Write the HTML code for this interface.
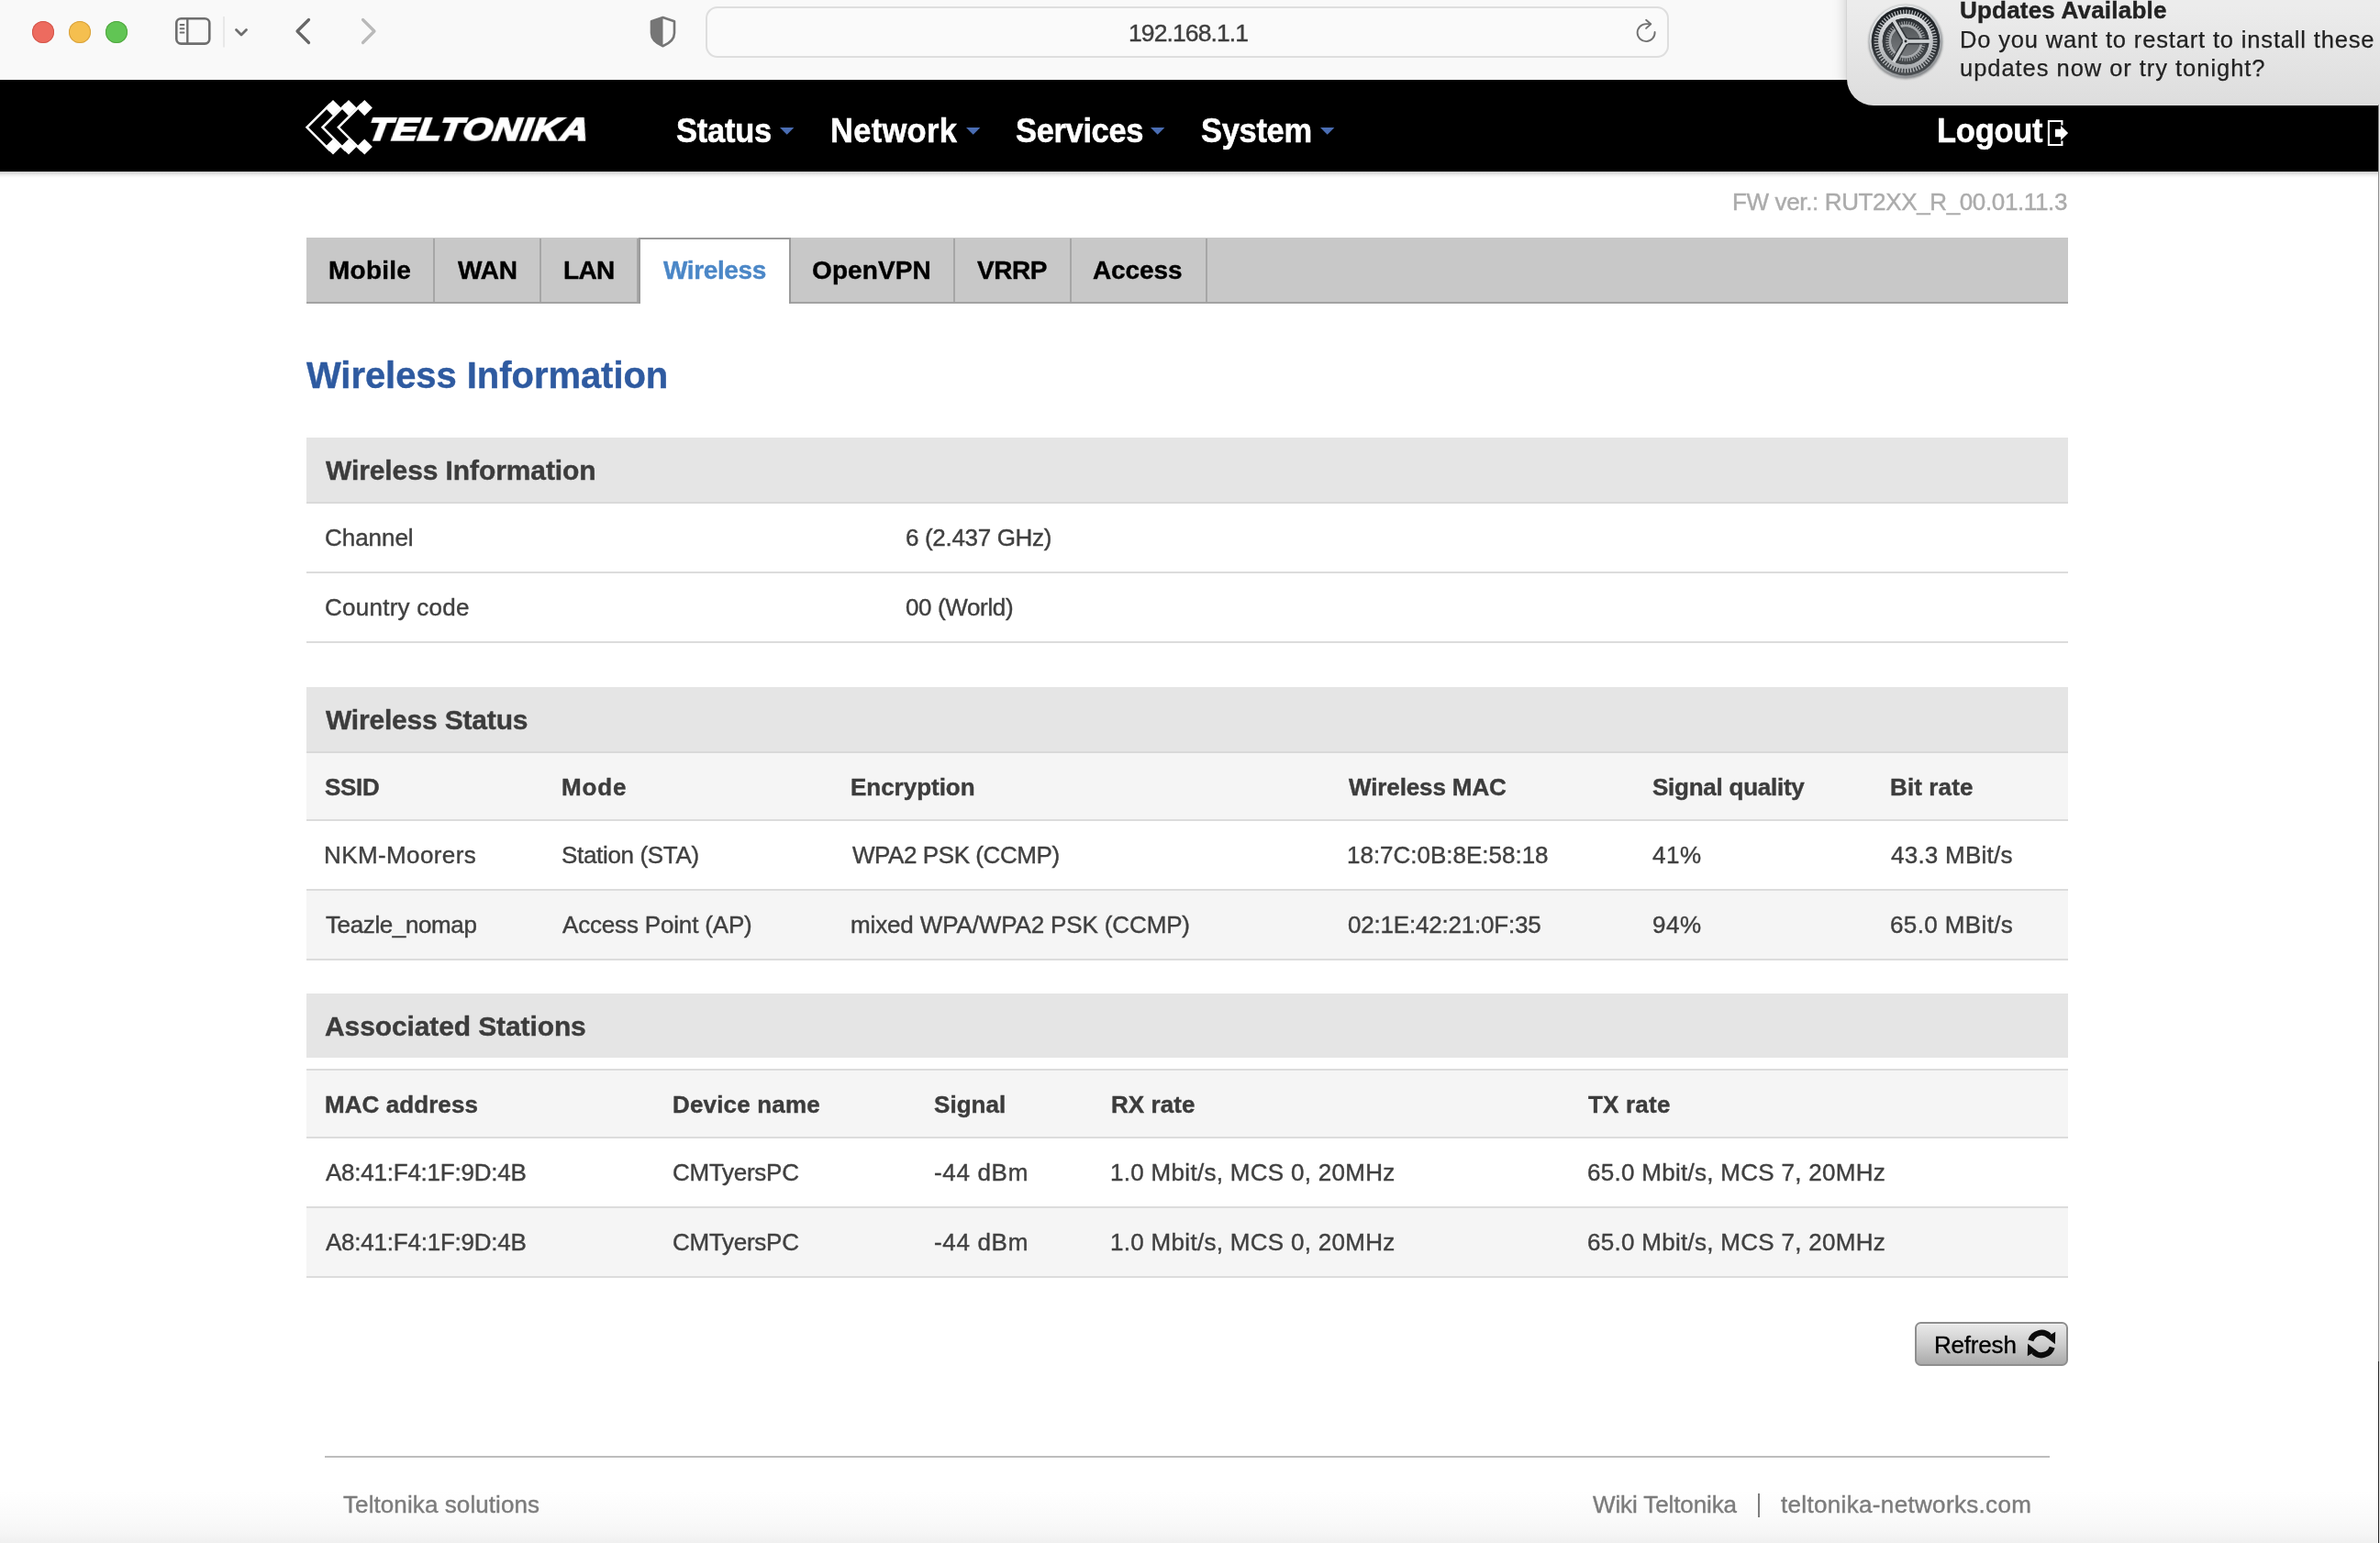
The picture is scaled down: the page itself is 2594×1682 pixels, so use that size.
<!DOCTYPE html>
<html lang="en"><head><meta charset="utf-8"><title>Wireless Information</title>
<style>
html,body{margin:0;padding:0;}
body{width:2594px;height:1682px;position:relative;overflow:hidden;background:#fff;font-family:"Liberation Sans",sans-serif;}
.t{position:absolute;white-space:nowrap;line-height:1;will-change:transform;-webkit-text-stroke:0.4px;}
.b{position:absolute;}
svg{position:absolute;overflow:visible;}
</style></head><body>
<div class="b" style="left:0px;top:1625px;width:2594px;height:57px;background:linear-gradient(#fff 0,#fdfdfd 22%,#fafafa 52%,#f6f6f6 80%,#f0f0f0 100%);"></div>
<div class="b" style="left:0px;top:0px;width:2594px;height:87px;background:#f9f9f9;"></div>
<div class="b" style="left:35px;top:22.5px;width:24px;height:24px;border-radius:50%;background:#ed6b5f;box-shadow:inset 0 0 0 1px #d3564b;"></div>
<div class="b" style="left:75px;top:22.5px;width:24px;height:24px;border-radius:50%;background:#f5bf4f;box-shadow:inset 0 0 0 1px #d8a13d;"></div>
<div class="b" style="left:115px;top:22.5px;width:24px;height:24px;border-radius:50%;background:#61c554;box-shadow:inset 0 0 0 1px #51a640;"></div>
<svg style="left:0;top:0" width="450" height="87" viewBox="0 0 450 87" fill="none">
<rect x="192.3" y="20.2" width="36" height="27.4" rx="5" stroke="#6e6e6e" stroke-width="2.6"/>
<line x1="204.3" y1="20.2" x2="204.3" y2="47.6" stroke="#6e6e6e" stroke-width="2.4"/>
<g stroke="#6e6e6e" stroke-width="2" stroke-linecap="round"><line x1="196.6" y1="27" x2="200.4" y2="27"/><line x1="196.6" y1="31.2" x2="200.4" y2="31.2"/><line x1="196.6" y1="35.4" x2="200.4" y2="35.4"/></g>
<line x1="244" y1="18" x2="244" y2="51.5" stroke="#e2e2e2" stroke-width="1.5"/>
<polyline points="257.5,32.5 263,38 268.5,32.5" stroke="#6e6e6e" stroke-width="2.8" stroke-linecap="round" stroke-linejoin="round"/>
<polyline points="336.5,21.5 324,34 336.5,46.5" stroke="#666" stroke-width="3.2" stroke-linecap="round" stroke-linejoin="round"/>
<polyline points="395.5,21.5 408,34 395.5,46.5" stroke="#b9b9b9" stroke-width="3.2" stroke-linecap="round" stroke-linejoin="round"/>
</svg>
<svg style="left:700px;top:10px" width="50" height="50" viewBox="0 0 50 50">
<path d="M22.5 9 L35 13.2 L35 26 C35 33 29 37.5 22.5 40.2 C16 37.5 10 33 10 26 L10 13.2 Z" fill="none" stroke="#767676" stroke-width="2.6" stroke-linejoin="round"/>
<path d="M22.5 9 L10 13.2 L10 26 C10 33 16 37.5 22.5 40.2 Z" fill="#767676"/>
</svg>
<div class="b" style="left:769px;top:7px;width:1046px;height:52px;border:2px solid #dedede;border-radius:13px;background:#fafafa;"></div>
<span class="t" style="left:1230.00px;top:22.57px;font-size:26.5px;color:#3e3e3e;letter-spacing:-0.900px;">192.168.1.1</span>
<svg style="left:1775px;top:15px" width="40" height="40" viewBox="0 0 40 40" fill="none" stroke="#727272" stroke-width="1.9" stroke-linecap="round" stroke-linejoin="round">
<path d="M28.6 20.0 A9.5 9.5 0 1 1 19.1 11.1 L23.8 11.15"/>
<polyline points="19.1,6.8 24.3,11.2 19.1,15.9"/>
</svg>
<div class="b" style="left:0px;top:87px;width:2594px;height:100px;background:#000;"></div>
<div class="b" style="left:0px;top:187px;width:2594px;height:7px;background:linear-gradient(rgba(0,0,0,.2),rgba(0,0,0,.06) 55%,rgba(0,0,0,0));"></div>
<svg style="left:0;top:0" width="700" height="200" viewBox="0 0 700 200" fill="#fff"><polygon points="363,109.0 371.6,117.6 363,126.19999999999999 354.4,117.6"/><polygon points="363,151.4 371.6,160.0 363,168.6 354.4,160.0"/><polyline points="360.02,113.30 334.52,138.80 360.02,164.30" fill="none" stroke="#fff" stroke-width="2.5" stroke-linejoin="miter"/><polygon points="380,109.0 388.6,117.6 380,126.19999999999999 371.4,117.6"/><polygon points="380,151.4 388.6,160.0 380,168.6 371.4,160.0"/><polyline points="377.02,113.30 351.52,138.80 377.02,164.30" fill="none" stroke="#fff" stroke-width="2.5" stroke-linejoin="miter"/><polygon points="397.3,109.0 405.90000000000003,117.6 397.3,126.19999999999999 388.7,117.6"/><polygon points="397.3,151.4 405.90000000000003,160.0 397.3,168.6 388.7,160.0"/><polyline points="394.32,113.30 368.82,138.80 394.32,164.30" fill="none" stroke="#fff" stroke-width="2.5" stroke-linejoin="miter"/></svg>
<span class="t" style="left:399.60px;top:124.30px;font-size:34.5px;color:#fff;font-weight:bold;font-style:italic;letter-spacing:0.7px;-webkit-text-stroke:1.9px #fff;transform-origin:0 85%;transform:skewX(-8deg) scaleX(1.2);">TELTONIKA</span>
<span class="t" style="left:737.00px;top:126.10px;font-size:34.5px;color:#fff;font-weight:bold;letter-spacing:-0.248px;transform-origin:0 84.65%;transform:scaleY(1.05);-webkit-text-stroke:0.5px #fff;">Status</span>
<svg style="left:849.9px;top:138.8px" width="16" height="8" viewBox="0 0 16 8"><polygon points="0,0 15.4,0 7.7,7.8" fill="#4a6db3"/></svg>
<span class="t" style="left:905.00px;top:126.10px;font-size:34.5px;color:#fff;font-weight:bold;letter-spacing:0.296px;transform-origin:0 84.65%;transform:scaleY(1.05);-webkit-text-stroke:0.5px #fff;">Network</span>
<svg style="left:1052.8px;top:138.8px" width="16" height="8" viewBox="0 0 16 8"><polygon points="0,0 15.4,0 7.7,7.8" fill="#4a6db3"/></svg>
<span class="t" style="left:1107.00px;top:126.10px;font-size:34.5px;color:#fff;font-weight:bold;letter-spacing:-0.358px;transform-origin:0 84.65%;transform:scaleY(1.05);-webkit-text-stroke:0.5px #fff;">Services</span>
<svg style="left:1254.2px;top:138.8px" width="16" height="8" viewBox="0 0 16 8"><polygon points="0,0 15.4,0 7.7,7.8" fill="#4a6db3"/></svg>
<span class="t" style="left:1309.00px;top:126.10px;font-size:34.5px;color:#fff;font-weight:bold;letter-spacing:-0.320px;transform-origin:0 84.65%;transform:scaleY(1.05);-webkit-text-stroke:0.5px #fff;">System</span>
<svg style="left:1439px;top:138.8px" width="16" height="8" viewBox="0 0 16 8"><polygon points="0,0 15.4,0 7.7,7.8" fill="#4a6db3"/></svg>
<span class="t" style="left:2111.30px;top:126.10px;font-size:34.5px;color:#fff;font-weight:bold;letter-spacing:-0.25px;transform-origin:0 84.65%;transform:scaleY(1.05);-webkit-text-stroke:0.5px #fff;">Logout</span>
<svg style="left:2228px;top:128px" width="30" height="34" viewBox="0 0 30 34" fill="none">
<path d="M19.4 8.6 V4 H4.9 V30 H19.4 V25.4" stroke="#fff" stroke-width="2.1"/>
<polygon points="11.9,12.7 18,12.7 18,8.9 26.1,17 18,25.1 18,21.3 11.9,21.3" fill="#fff"/>
</svg>
<div class="b" style="left:2013px;top:-40px;width:640px;height:155px;border-radius:0 0 0 29px;background:linear-gradient(#ececec 30%,#dddddd);box-shadow:0 1px 16px rgba(0,0,0,.22), 0 0 2px rgba(0,0,0,.18);"></div>
<svg style="left:2036px;top:3.5px" width="82" height="82" viewBox="-41 -41 82 82">
<defs>
<linearGradient id="g1" x1="-20" y1="-40" x2="20" y2="40" gradientUnits="userSpaceOnUse"><stop offset="0" stop-color="#eceeef"/><stop offset=".5" stop-color="#bcbfc2"/><stop offset="1" stop-color="#85888b"/></linearGradient>
<linearGradient id="g2" x1="0" y1="-38" x2="0" y2="38" gradientUnits="userSpaceOnUse"><stop offset="0" stop-color="#1b1f23"/><stop offset=".6" stop-color="#2d3135"/><stop offset="1" stop-color="#4d5154"/></linearGradient>
<linearGradient id="g3" x1="0" y1="-30" x2="0" y2="30" gradientUnits="userSpaceOnUse"><stop offset="0" stop-color="#dfe1e3"/><stop offset="1" stop-color="#a9acaf"/></linearGradient>
<linearGradient id="g4" x1="0" y1="-25" x2="0" y2="25" gradientUnits="userSpaceOnUse"><stop offset="0" stop-color="#2c3034"/><stop offset="1" stop-color="#44484b"/></linearGradient>
<linearGradient id="g5" x1="0" y1="-16" x2="0" y2="16" gradientUnits="userSpaceOnUse"><stop offset="0" stop-color="#54585b"/><stop offset="1" stop-color="#777a7d"/></linearGradient>
</defs>
<filter id="gb" x="-20%" y="-20%" width="140%" height="140%"><feGaussianBlur stdDeviation="0.9"/></filter>
<circle r="40.3" cy="0.7" fill="#3a3e42" fill-opacity=".55" filter="url(#gb)"/>
<circle r="39.7" fill="url(#g1)"/>
<circle r="37.4" fill="url(#g2)"/>
<circle r="31.8" fill="none" stroke="#b9bcbf" stroke-width="5.2" stroke-dasharray="1.3 1.822"/>
<circle r="27.6" fill="none" stroke="url(#g3)" stroke-width="4.6"/>
<circle r="25.3" fill="url(#g4)"/>
<circle r="20" fill="none" stroke="#9fa2a5" stroke-width="3.6" stroke-dasharray="1.15 1.468"/>
<circle r="17" fill="none" stroke="#a6a9ac" stroke-width="3"/>
<circle r="15.5" fill="url(#g5)"/>
<g stroke="#25292d" stroke-width="7" stroke-opacity=".8"><line x1="0" y1="0" x2="25.5" y2="0"/><line x1="0" y1="0" x2="-12.75" y2="22.08"/><line x1="0" y1="0" x2="-12.75" y2="-22.08"/></g>
<g stroke="#cfd2d4" stroke-width="3.7"><line x1="0" y1="0" x2="26.5" y2="0"/><line x1="0" y1="0" x2="-13.25" y2="22.95"/><line x1="0" y1="0" x2="-13.25" y2="-22.95"/></g>
<circle r="3.3" fill="#cbced1"/><circle r="1.45" fill="#26292c"/>
</svg>
<span class="t" style="left:2136.00px;top:-1.81px;font-size:26px;color:#222;font-weight:bold;letter-spacing:0.209px;">Updates Available</span>
<span class="t" style="left:2136.00px;top:30.71px;font-size:25.5px;color:#222;letter-spacing:0.842px;-webkit-text-stroke:0.25px #222;">Do you want to restart to install these</span>
<span class="t" style="left:2136.00px;top:62.41px;font-size:25.5px;color:#222;letter-spacing:0.958px;-webkit-text-stroke:0.25px #222;">updates now or try tonight?</span>
<div class="b" style="left:2592px;top:114px;width:1px;height:1373px;background:#8a8a8a;"></div>
<div class="b" style="left:2592px;top:1484px;width:1px;height:198px;background:#222;"></div>
<div class="b" style="left:2593px;top:114px;width:1px;height:1568px;background:#eee;"></div>
<span class="t" style="left:1888.00px;top:206.99px;font-size:26px;color:#ababab;letter-spacing:-0.363px;">FW ver.: RUT2XX_R_00.01.11.3</span>
<div class="b" style="left:334px;top:259px;width:1920px;height:70px;background:#c8c8c8;border-bottom:2px solid #a2a2a2;"></div>
<div class="b" style="left:472px;top:260px;width:2px;height:69px;background:#a6a6a6;"></div>
<span class="t" style="left:358.00px;top:281.30px;font-size:28px;color:#000;font-weight:bold;letter-spacing:0.224px;">Mobile</span>
<div class="b" style="left:587.5px;top:260px;width:2px;height:69px;background:#a6a6a6;"></div>
<span class="t" style="left:499.00px;top:281.30px;font-size:28px;color:#000;font-weight:bold;letter-spacing:-0.195px;">WAN</span>
<div class="b" style="left:694.4px;top:260px;width:2px;height:69px;background:#a6a6a6;"></div>
<span class="t" style="left:614.00px;top:281.30px;font-size:28px;color:#000;font-weight:bold;letter-spacing:-0.660px;">LAN</span>
<div class="b" style="left:696px;top:259px;width:162px;height:70px;background:#fff;border:2px solid #9b9b9b;border-bottom:none;"></div>
<span class="t" style="left:723.00px;top:281.30px;font-size:28px;color:#4b87c7;font-weight:bold;letter-spacing:-0.385px;">Wireless</span>
<div class="b" style="left:1039px;top:260px;width:2px;height:69px;background:#a6a6a6;"></div>
<span class="t" style="left:885.00px;top:281.30px;font-size:28px;color:#000;font-weight:bold;letter-spacing:0.101px;">OpenVPN</span>
<div class="b" style="left:1165.5px;top:260px;width:2px;height:69px;background:#a6a6a6;"></div>
<span class="t" style="left:1065.00px;top:281.30px;font-size:28px;color:#000;font-weight:bold;letter-spacing:-0.486px;">VRRP</span>
<div class="b" style="left:1313.5px;top:260px;width:2px;height:69px;background:#a6a6a6;"></div>
<span class="t" style="left:1191.00px;top:281.30px;font-size:28px;color:#000;font-weight:bold;letter-spacing:-0.098px;">Access</span>
<span class="t" style="left:334.00px;top:388.84px;font-size:40px;color:#2e5aa0;font-weight:bold;letter-spacing:-0.054px;">Wireless Information</span>
<div class="b" style="left:334px;top:477px;width:1920px;height:70px;background:#e5e5e5;border-bottom:2px solid #d9d9d9;"></div>
<span class="t" style="left:355.00px;top:497.61px;font-size:30px;color:#3c3c3c;font-weight:bold;letter-spacing:-0.098px;">Wireless Information</span>
<span class="t" style="left:354.00px;top:572.99px;font-size:26px;color:#404040;letter-spacing:-0.043px;">Channel</span>
<span class="t" style="left:987.00px;top:572.99px;font-size:26px;color:#404040;letter-spacing:-0.323px;">6 (2.437 GHz)</span>
<div class="b" style="left:334px;top:623px;width:1920px;height:2px;background:#dcdcdc;"></div>
<span class="t" style="left:354.00px;top:648.99px;font-size:26px;color:#404040;letter-spacing:0.260px;">Country code</span>
<span class="t" style="left:987.00px;top:648.99px;font-size:26px;color:#404040;letter-spacing:-0.371px;">00 (World)</span>
<div class="b" style="left:334px;top:699px;width:1920px;height:2px;background:#dcdcdc;"></div>
<div class="b" style="left:334px;top:749px;width:1920px;height:70px;background:#e5e5e5;border-bottom:2px solid #d9d9d9;"></div>
<span class="t" style="left:355.00px;top:769.61px;font-size:30px;color:#3c3c3c;font-weight:bold;letter-spacing:-0.193px;">Wireless Status</span>
<div class="b" style="left:334px;top:821px;width:1920px;height:72px;background:#f5f5f5;"></div>
<div class="b" style="left:334px;top:893px;width:1920px;height:2px;background:#dcdcdc;"></div>
<div class="b" style="left:334px;top:969px;width:1920px;height:2px;background:#dcdcdc;"></div>
<div class="b" style="left:334px;top:971px;width:1920px;height:74px;background:#f5f5f5;"></div>
<div class="b" style="left:334px;top:1045px;width:1920px;height:2px;background:#dcdcdc;"></div>
<span class="t" style="left:354.00px;top:844.99px;font-size:26px;color:#3c3c3c;font-weight:bold;letter-spacing:-0.283px;">SSID</span>
<span class="t" style="left:612.00px;top:844.99px;font-size:26px;color:#3c3c3c;font-weight:bold;letter-spacing:0.872px;">Mode</span>
<span class="t" style="left:927.00px;top:844.99px;font-size:26px;color:#3c3c3c;font-weight:bold;letter-spacing:-0.020px;">Encryption</span>
<span class="t" style="left:1470.00px;top:844.99px;font-size:26px;color:#3c3c3c;font-weight:bold;letter-spacing:-0.119px;">Wireless MAC</span>
<span class="t" style="left:1801.00px;top:844.99px;font-size:26px;color:#3c3c3c;font-weight:bold;letter-spacing:-0.246px;">Signal quality</span>
<span class="t" style="left:2060.00px;top:844.99px;font-size:26px;color:#3c3c3c;font-weight:bold;letter-spacing:0.121px;">Bit rate</span>
<span class="t" style="left:353.00px;top:918.99px;font-size:26px;color:#404040;letter-spacing:0.392px;">NKM-Moorers</span>
<span class="t" style="left:612.00px;top:918.99px;font-size:26px;color:#404040;letter-spacing:-0.330px;">Station (STA)</span>
<span class="t" style="left:929.00px;top:918.99px;font-size:26px;color:#404040;letter-spacing:-0.433px;">WPA2 PSK (CCMP)</span>
<span class="t" style="left:1468.00px;top:918.99px;font-size:26px;color:#404040;letter-spacing:-0.011px;">18:7C:0B:8E:58:18</span>
<span class="t" style="left:1801.00px;top:918.99px;font-size:26px;color:#404040;letter-spacing:0.545px;">41%</span>
<span class="t" style="left:2061.00px;top:918.99px;font-size:26px;color:#404040;letter-spacing:0.242px;">43.3 MBit/s</span>
<span class="t" style="left:355.00px;top:994.99px;font-size:26px;color:#404040;letter-spacing:-0.384px;">Teazle_nomap</span>
<span class="t" style="left:613.00px;top:994.99px;font-size:26px;color:#404040;letter-spacing:-0.174px;">Access Point (AP)</span>
<span class="t" style="left:927.00px;top:994.99px;font-size:26px;color:#404040;letter-spacing:-0.132px;">mixed WPA/WPA2 PSK (CCMP)</span>
<span class="t" style="left:1469.00px;top:994.99px;font-size:26px;color:#404040;letter-spacing:-0.203px;">02:1E:42:21:0F:35</span>
<span class="t" style="left:1801.00px;top:994.99px;font-size:26px;color:#404040;letter-spacing:0.525px;">94%</span>
<span class="t" style="left:2060.00px;top:994.99px;font-size:26px;color:#404040;letter-spacing:0.378px;">65.0 MBit/s</span>
<div class="b" style="left:334px;top:1083px;width:1920px;height:70px;background:#e5e5e5;"></div>
<span class="t" style="left:354.00px;top:1103.61px;font-size:30px;color:#3c3c3c;font-weight:bold;letter-spacing:-0.108px;">Associated Stations</span>
<div class="b" style="left:334px;top:1165px;width:1920px;height:2px;background:#dcdcdc;"></div>
<div class="b" style="left:334px;top:1167px;width:1920px;height:72px;background:#f5f5f5;"></div>
<div class="b" style="left:334px;top:1239px;width:1920px;height:2px;background:#dcdcdc;"></div>
<div class="b" style="left:334px;top:1315px;width:1920px;height:2px;background:#dcdcdc;"></div>
<div class="b" style="left:334px;top:1317px;width:1920px;height:74px;background:#f5f5f5;"></div>
<div class="b" style="left:334px;top:1391px;width:1920px;height:2px;background:#dcdcdc;"></div>
<span class="t" style="left:354.00px;top:1190.99px;font-size:26px;color:#3c3c3c;font-weight:bold;letter-spacing:0.072px;">MAC address</span>
<span class="t" style="left:733.00px;top:1190.99px;font-size:26px;color:#3c3c3c;font-weight:bold;letter-spacing:0.165px;">Device name</span>
<span class="t" style="left:1018.00px;top:1190.99px;font-size:26px;color:#3c3c3c;font-weight:bold;letter-spacing:0.054px;">Signal</span>
<span class="t" style="left:1211.00px;top:1190.99px;font-size:26px;color:#3c3c3c;font-weight:bold;letter-spacing:0.078px;">RX rate</span>
<span class="t" style="left:1731.00px;top:1190.99px;font-size:26px;color:#3c3c3c;font-weight:bold;letter-spacing:0.202px;">TX rate</span>
<span class="t" style="left:355.00px;top:1264.99px;font-size:26px;color:#404040;letter-spacing:-0.236px;">A8:41:F4:1F:9D:4B</span>
<span class="t" style="left:733.00px;top:1264.99px;font-size:26px;color:#404040;letter-spacing:-0.273px;">CMTyersPC</span>
<span class="t" style="left:1018.00px;top:1264.99px;font-size:26px;color:#404040;letter-spacing:0.671px;">-44 dBm</span>
<span class="t" style="left:1210.00px;top:1264.99px;font-size:26px;color:#404040;letter-spacing:0.302px;">1.0 Mbit/s, MCS 0, 20MHz</span>
<span class="t" style="left:1730.00px;top:1264.99px;font-size:26px;color:#404040;letter-spacing:0.287px;">65.0 Mbit/s, MCS 7, 20MHz</span>
<span class="t" style="left:355.00px;top:1340.99px;font-size:26px;color:#404040;letter-spacing:-0.226px;">A8:41:F4:1F:9D:4B</span>
<span class="t" style="left:733.00px;top:1340.99px;font-size:26px;color:#404040;letter-spacing:-0.271px;">CMTyersPC</span>
<span class="t" style="left:1018.00px;top:1340.99px;font-size:26px;color:#404040;letter-spacing:0.671px;">-44 dBm</span>
<span class="t" style="left:1210.00px;top:1340.99px;font-size:26px;color:#404040;letter-spacing:0.302px;">1.0 Mbit/s, MCS 0, 20MHz</span>
<span class="t" style="left:1730.00px;top:1340.99px;font-size:26px;color:#404040;letter-spacing:0.287px;">65.0 Mbit/s, MCS 7, 20MHz</span>
<div class="b" style="left:2087px;top:1441px;width:163px;height:43.5px;border:2px solid #8e8e8e;border-radius:6.5px;background:linear-gradient(#eaeaea,#cfcfcf 48%,#aaa);box-shadow:inset 0 1px 0 rgba(255,255,255,.45);"></div>
<span class="t" style="left:2107.60px;top:1452.79px;font-size:26px;color:#000;letter-spacing:-0.2px;-webkit-text-stroke:0.35px #000;">Refresh</span>
<svg style="left:2225.2px;top:1464.7px" width="1" height="1" viewBox="0 0 1 1" fill="#0c0c0c">
<g id="ra"><path d="M-11.67 -3.57 A12.2 12.2 0 0 1 8.63 -8.63" fill="none" stroke="#0c0c0c" stroke-width="6.2"/>
<polygon points="5.6,-7.2 15.2,-13.2 14.9,0.2"/></g>
<use href="#ra" transform="rotate(180)"/>
</svg>
<div class="b" style="left:354px;top:1587px;width:1880px;height:2px;background:#bdbdbd;"></div>
<span class="t" style="left:374.00px;top:1626.99px;font-size:26px;color:#7c7c7c;letter-spacing:0.090px;">Teltonika solutions</span>
<span class="t" style="left:1736.00px;top:1626.99px;font-size:26px;color:#7c7c7c;letter-spacing:-0.113px;">Wiki Teltonika</span>
<div class="b" style="left:1916px;top:1628px;width:2px;height:26px;background:#7e7e7e;"></div>
<span class="t" style="left:1941.00px;top:1626.99px;font-size:26px;color:#7c7c7c;letter-spacing:0.334px;">teltonika-networks.com</span>
</body></html>
